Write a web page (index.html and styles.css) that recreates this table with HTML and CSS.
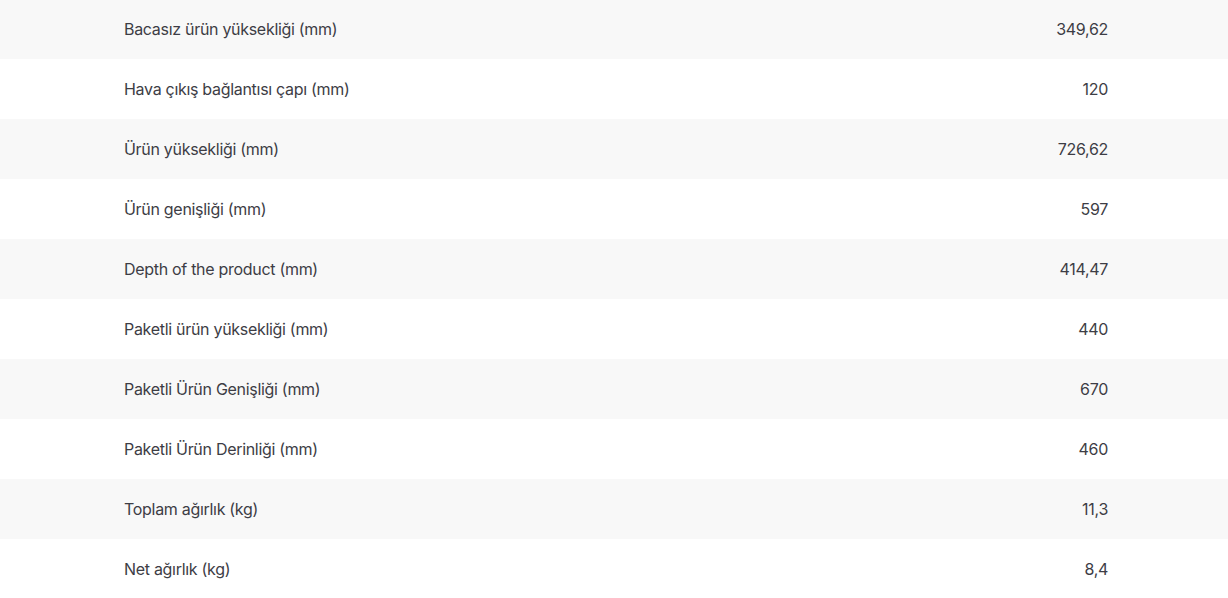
FILE: index.html
```html
<!DOCTYPE html>
<html lang="tr">
<head>
<meta charset="utf-8">
<link rel="stylesheet" href="styles.css">
</head>
<body>
<div class="table">
  <div class="row"><span class="label">Bacasız ürün yüksekliği (mm)</span><span class="value">349,62</span></div>
  <div class="row"><span class="label">Hava çıkış bağlantısı çapı (mm)</span><span class="value">120</span></div>
  <div class="row"><span class="label">Ürün yüksekliği (mm)</span><span class="value">726,62</span></div>
  <div class="row"><span class="label">Ürün genişliği (mm)</span><span class="value">597</span></div>
  <div class="row"><span class="label">Depth of the product (mm)</span><span class="value">414,47</span></div>
  <div class="row"><span class="label">Paketli ürün yüksekliği (mm)</span><span class="value">440</span></div>
  <div class="row"><span class="label">Paketli Ürün Genişliği (mm)</span><span class="value">670</span></div>
  <div class="row"><span class="label">Paketli Ürün Derinliği (mm)</span><span class="value">460</span></div>
  <div class="row"><span class="label">Toplam ağırlık (kg)</span><span class="value">11,3</span></div>
  <div class="row"><span class="label">Net ağırlık (kg)</span><span class="value">8,4</span></div>
</div>
</body>
</html>
```
FILE: styles.css
```css
html, body {
  margin: 0;
  padding: 0;
  background: #ffffff;
}
body {
  font-family: Inter, "Noto Sans", sans-serif;
  font-size: 16px;
  letter-spacing: -0.3px;
  color: #3d3d45;
  overflow: hidden;
}
.table {
  margin-top: -1px;
  display: flex;
  flex-direction: column;
}
.row {
  height: 60px;
  display: flex;
  align-items: center;
  justify-content: space-between;
  padding: 0 120px 0 124px;
}
.row:nth-child(odd) {
  background: #f8f8f8;
}
```
